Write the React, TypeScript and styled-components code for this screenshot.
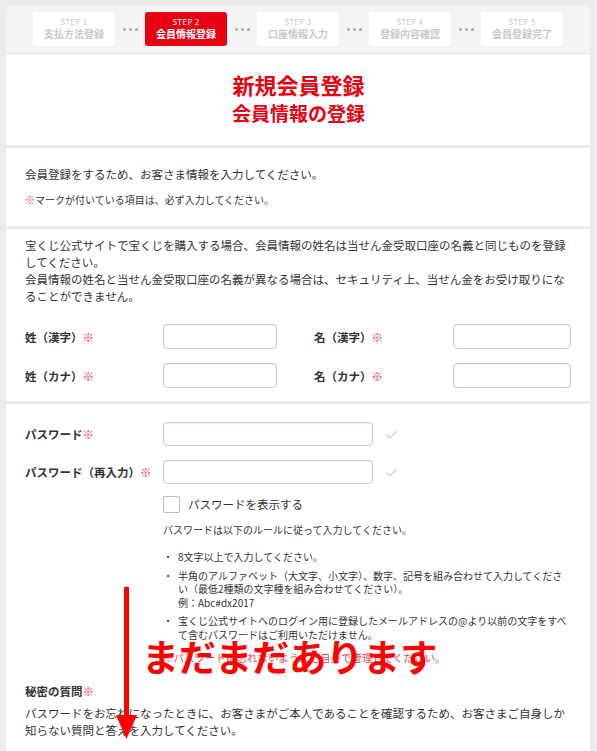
import { Fragment } from "react";
import styled, { createGlobalStyle } from "styled-components";

const GlobalStyle = createGlobalStyle`
  * { box-sizing: border-box; }
  body {
    margin: 0;
    background: #ececec;
    font-family: "Noto Sans CJK JP", "Noto Sans", sans-serif;
    color: #333;
  }
`;

const Page = styled.div`
  position: relative;
  margin: 5px 7px 0 6px;
  height: 746px;
  overflow: hidden;
`;

const StepBar = styled.div`
  display: flex;
  align-items: center;
  justify-content: center;
  height: 49px;
  background: #f4f4f4;
  border-radius: 8px 8px 0 0;
  border-bottom: 1px solid #e6e6e6;
`;

const Step = styled.div<{ $active?: boolean }>`
  width: 82px;
  height: 34px;
  border-radius: 3px;
  background: ${(p) => (p.$active ? "#e60012" : "#fff")};
  color: ${(p) => (p.$active ? "#fff" : "#c9c9c9")};
  display: flex;
  flex-direction: column;
  align-items: center;
  justify-content: center;
`;

const StepNum = styled.span`
  font-size: 8px;
  line-height: 10px;
  letter-spacing: 0.3px;
`;

const StepName = styled.span`
  font-size: 10px;
  line-height: 14px;
  font-weight: 700;
`;

const Dots = styled.div`
  width: 30px;
  display: flex;
  justify-content: center;
  gap: 3px;
  span {
    width: 3px;
    height: 3px;
    border-radius: 50%;
    background: #aaa;
  }
`;

const Panel = styled.section`
  background: #fff;
  margin-top: 3px;
  padding: 0 18px 0 19px;
  &:first-of-type {
    margin-top: 0;
  }
`;

const TitlePanel = styled(Panel)`
  padding-top: 15px;
  padding-bottom: 19px;
  text-align: center;
  color: #e60012;
  font-weight: 700;
`;

const Title = styled.h1`
  margin: 0;
  font-size: 22px;
  line-height: 30px;
`;

const SubTitle = styled.h2`
  margin: 0;
  font-size: 19px;
  line-height: 27px;
`;

const IntroPanel = styled(Panel)`
  padding-top: 17px;
  padding-bottom: 17px;
`;

const Lead = styled.p`
  margin: 0;
  font-size: 11.5px;
  line-height: 18px;
`;

const Note = styled.p`
  margin: 8px 0 0;
  font-size: 10px;
  line-height: 18px;
`;

const Req = styled.span`
  color: #e63a52;
  font-weight: 400;
`;

const NamePanel = styled(Panel)`
  padding-top: 8px;
  padding-bottom: 13px;
`;

const Para = styled.p<{ $top?: number }>`
  margin: ${(p) => p.$top ?? 0}px 0 0;
  font-size: 11.5px;
  line-height: 17px;
`;

const NameGrid = styled.div`
  display: grid;
  grid-template-columns: 138px 114px 37px 139px 118px;
  row-gap: 14px;
  margin-top: 19px;
  align-items: center;
`;

const Label = styled.label`
  font-size: 11.5px;
  font-weight: 700;
  line-height: 18px;
`;

const Input = styled.div<{ $h?: number }>`
  height: ${(p) => p.$h ?? 25}px;
  border: 1px solid #cacaca;
  border-radius: 4px;
  background: #fff;
  box-shadow: inset 0 1px 2px rgba(0, 0, 0, 0.07);
`;

const PasswordPanel = styled(Panel)`
  padding-top: 18px;
  padding-bottom: 30px;
`;

const PassRow = styled.div<{ $top?: number }>`
  display: grid;
  grid-template-columns: 138px 210px 1fr;
  align-items: center;
  margin-top: ${(p) => p.$top ?? 0}px;
`;

const Check = styled.svg`
  margin-left: 12px;
`;

const Indent = styled.div`
  margin-left: 138px;
`;

const CheckRow = styled(Indent)`
  display: flex;
  align-items: center;
  gap: 8px;
  margin-top: 12px;
  font-size: 11.5px;
  line-height: 17px;
`;

const Box = styled.span`
  width: 17px;
  height: 17px;
  border: 1px solid #bdbdbd;
  border-radius: 2px;
  background: #fff;
`;

const Rules = styled(Indent)`
  margin-top: 9px;
  font-size: 10px;
  line-height: 16px;
`;

const RuleList = styled.ul`
  list-style: none;
  margin: 12px 0 0 138px;
  padding: 0;
  font-size: 10px;
  line-height: 13.5px;
`;

const RuleItem = styled.li`
  display: flex;
  & + & {
    margin-top: 5px;
  }
  &::before {
    content: "・";
    flex: 0 0 15px;
  }
`;

const RedNote = styled(Indent)`
  margin-top: 9px;
  color: #e8455c;
  font-size: 10.5px;
  line-height: 16px;
`;

const Heading = styled.h3`
  margin: 16px 0 0;
  font-size: 11.5px;
  font-weight: 700;
  line-height: 18px;
`;

const Arrow = styled.svg`
  position: absolute;
  left: 104px;
  top: 580px;
`;

const Callout = styled.div`
  position: absolute;
  left: 136px;
  top: 633px;
  font-size: 37px;
  line-height: 37px;
  font-weight: 700;
  color: #ff0000;
  white-space: nowrap;
`;

const steps = [
  { num: "STEP 1", name: "支払方法登録" },
  { num: "STEP 2", name: "会員情報登録", active: true },
  { num: "STEP 3", name: "口座情報入力" },
  { num: "STEP 4", name: "登録内容確認" },
  { num: "STEP 5", name: "会員登録完了" },
];

function CheckMark() {
  return (
    <Check width="13" height="9" viewBox="0 0 13 9">
      <polyline points="1,4.5 4.5,8 12,1" fill="none" stroke="#cfcfcf" strokeWidth="1.2" />
    </Check>
  );
}

export default function App() {
  return (
    <>
      <GlobalStyle />
      <Page>
        <StepBar>
          {steps.map((s, i) => (
            <Fragment key={s.num}>
              {i > 0 && (
                <Dots>
                  <span />
                  <span />
                  <span />
                </Dots>
              )}
              <Step $active={s.active}>
                <StepNum>{s.num}</StepNum>
                <StepName>{s.name}</StepName>
              </Step>
            </Fragment>
          ))}
        </StepBar>

        <TitlePanel>
          <Title>新規会員登録</Title>
          <SubTitle>会員情報の登録</SubTitle>
        </TitlePanel>

        <IntroPanel>
          <Lead>会員登録をするため、お客さま情報を入力してください。</Lead>
          <Note>
            <Req>※</Req>マークが付いている項目は、必ず入力してください。
          </Note>
        </IntroPanel>

        <NamePanel>
          <Para>
            宝くじ公式サイトで宝くじを購入する場合、会員情報の姓名は当せん金受取口座の名義と同じものを登録してください。
            <br />
            会員情報の姓名と当せん金受取口座の名義が異なる場合は、セキュリティ上、当せん金をお受け取りになることができません。
          </Para>
          <NameGrid>
            <Label>
              姓（漢字）<Req>※</Req>
            </Label>
            <Input />
            <span />
            <Label>
              名（漢字）<Req>※</Req>
            </Label>
            <Input />
            <Label>
              姓（カナ）<Req>※</Req>
            </Label>
            <Input />
            <span />
            <Label>
              名（カナ）<Req>※</Req>
            </Label>
            <Input />
          </NameGrid>
        </NamePanel>

        <PasswordPanel>
          <PassRow>
            <Label>
              パスワード<Req>※</Req>
            </Label>
            <Input $h={24} />
            <CheckMark />
          </PassRow>
          <PassRow $top={14}>
            <Label>
              パスワード（再入力）<Req>※</Req>
            </Label>
            <Input $h={24} />
            <CheckMark />
          </PassRow>
          <CheckRow>
            <Box />
            パスワードを表示する
          </CheckRow>
          <Rules>パスワードは以下のルールに従って入力してください。</Rules>
          <RuleList>
            <RuleItem>8文字以上で入力してください。</RuleItem>
            <RuleItem>
              <span>
                半角のアルファベット（大文字、小文字）、数字、記号を組み合わせて入力してください（最低2種類の文字種を組み合わせてください）。
                <br />
                例：Abc#dx2017
              </span>
            </RuleItem>
            <RuleItem>
              宝くじ公式サイトへのログイン用に登録したメールアドレスの@より以前の文字をすべて含むパスワードはご利用いただけません。
            </RuleItem>
          </RuleList>
          <RedNote>※パスワードは忘れないようにご自身で管理してください。</RedNote>
          <Heading>
            秘密の質問<Req>※</Req>
          </Heading>
          <Para $top={5}>
            パスワードをお忘れになったときに、お客さまがご本人であることを確認するため、お客さまご自身しか知らない質問と答えを入力してください。
          </Para>
        </PasswordPanel>

        <Arrow width="32" height="162" viewBox="0 0 32 162">
          <rect x="14" y="2" width="5" height="132" fill="#ff0000" />
          <polygon points="6,130 27,130 16.5,154" fill="#ff0000" />
        </Arrow>
        <Callout>まだまだあります</Callout>
      </Page>
    </>
  );
}
